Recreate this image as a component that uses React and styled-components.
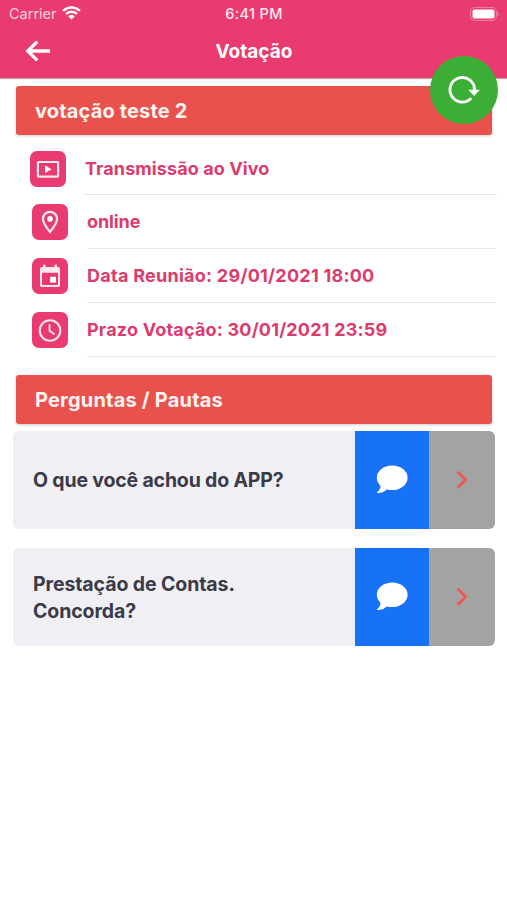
import styled, { createGlobalStyle } from "styled-components";

const GlobalStyle = createGlobalStyle`
    * {
        box-sizing: border-box;
    }

    body {
        margin: 0;
        background-color: #fff;
        font-family: Inter, "Liberation Sans", sans-serif;
    }

    button {
        border: none;
        padding: 0;
        background: none;
        font: inherit;
    }

    svg {
        display: block;
    }
`;

const Screen = styled.div`
    position: relative;
    width: 507px;
    height: 900px;
    overflow: hidden;
`;

const Header = styled.header`
    height: 78px;
    background-color: #e93b6f;
    box-shadow: 0 1px 1px rgba(80, 0, 30, 0.35);
    color: #fff;
`;

const StatusBar = styled.div`
    display: grid;
    grid-template-columns: 1fr auto 1fr;
    align-items: center;
    height: 27px;
    padding: 0 8px 0 9px;
`;

const Carrier = styled.div`
    display: flex;
    align-items: center;
    gap: 5px;
    font-size: 14.5px;
    color: #ffd3e0;
`;

const Time = styled.div`
    font-size: 14.5px;
    font-weight: 500;
    letter-spacing: 0.35px;
    color: #ffe8ef;
`;

const Battery = styled.svg`
    justify-self: end;
`;

const NavBar = styled.div`
    display: grid;
    grid-template-columns: 1fr auto 1fr;
    align-items: center;
    height: 49px;
    padding: 0 24px 0 25px;
`;

const Title = styled.h1`
    margin: 0;
    font-size: 19px;
    font-weight: 700;
`;

const RefreshButton = styled.button`
    position: absolute;
    top: 56px;
    right: 9px;
    display: grid;
    place-items: center;
    width: 68px;
    height: 68px;
    border-radius: 50%;
    background-color: #3bae36;
`;

const Banner = styled.h2`
    display: flex;
    align-items: center;
    height: 49px;
    margin: ${(props) => props.$margin};
    padding: 1px 19px 0;
    border-radius: 3px;
    background-color: #e9524c;
    box-shadow: 0 1px 3px rgba(0, 0, 0, 0.2);
    font-size: 20px;
    font-weight: 700;
    letter-spacing: ${(props) => props.$spacing};
    color: #fff4f1;
`;

const InfoList = styled.ul`
    margin: 0;
    padding: 0;
    list-style: none;
`;

const InfoRow = styled.li`
    display: flex;
    align-items: center;
    gap: ${(props) => (props.$wide ? "18px" : "19px")};
    height: 53.75px;
    padding-left: ${(props) => (props.$wide ? "30px" : "32px")};
    padding-right: ${(props) => (props.$wide ? "10px" : "11px")};
`;

const IconTile = styled.div`
    display: grid;
    place-items: center;
    width: 36px;
    height: 36px;
    border-radius: 7px;
    background-color: #e93b6f;
`;

const InfoText = styled.div`
    display: flex;
    flex: 1;
    align-items: center;
    height: 100%;
    padding-left: ${(props) => (props.$inset ? "1px" : "0")};
    border-bottom: 1px solid #e9e9ec;
    font-size: 18px;
    font-weight: 700;
    letter-spacing: ${(props) => props.$spacing};
    color: #dc3b6c;
`;

const QuestionList = styled.div`
    display: flex;
    flex-direction: column;
    gap: 19px;
    padding: 7px 12px 0 13px;
`;

const QuestionCard = styled.div`
    display: grid;
    grid-template-columns: 342px 74px 1fr;
    height: 98px;
    border-radius: 6px;
    overflow: hidden;
    background-color: #f0eff4;
`;

const Question = styled.div`
    display: flex;
    align-items: center;
    padding: 2px 40px 0 20px;
    white-space: pre-line;
    font-size: 19.5px;
    font-weight: 700;
    line-height: 27px;
    letter-spacing: ${(props) => props.$spacing};
    color: #3b3a48;
`;

const CommentButton = styled.button`
    display: grid;
    place-items: center;
    background-color: #1872f6;
`;

const OpenButton = styled.button`
    display: grid;
    place-items: center;
    background-color: #a3a3a3;
`;

function WifiIcon() {
    return (
        <svg width="19" height="15" viewBox="0 0 19 15" fill="none">
            <path
                d="M1.1 4.9a11.9 11.9 0 0 1 16.8 0M4 8a7.7 7.7 0 0 1 11 0"
                stroke="#fff"
                strokeWidth="2.4"
            />
            <path d="M9.5 13.6 6.2 10.3a4.6 4.6 0 0 1 6.6 0Z" fill="#fff" />
        </svg>
    );
}

function BatteryIcon() {
    return (
        <Battery width="29" height="14" viewBox="0 0 29 14" fill="none">
            <rect
                x="0.6"
                y="0.6"
                width="25.8"
                height="12.8"
                rx="3.5"
                stroke="#f282a5"
            />
            <rect x="2.5" y="2.5" width="22" height="9" rx="2" fill="#fff" />
            <path d="M27.4 5v4q1.5-.5 1.5-2t-1.5-2Z" fill="#f282a5" />
        </Battery>
    );
}

function BackIcon() {
    return (
        <svg width="26" height="24" viewBox="0 0 26 24" fill="none">
            <path
                d="M12.2 1.7 2.8 11l9.4 9.3M3 11h22"
                stroke="#fff"
                strokeWidth="3.3"
            />
        </svg>
    );
}

function RefreshIcon() {
    return (
        <svg width="34" height="30" viewBox="0 0 34 30" fill="none">
            <path
                d="M24.2 23.3A12.3 12.3 0 1 1 27.6 15"
                stroke="#fff"
                strokeWidth="2.9"
            />
            <path d="M21.3 14.8h11.6L27.1 21Z" fill="#fff" />
        </svg>
    );
}

function VideoIcon() {
    return (
        <svg width="24" height="20" viewBox="0 0 24 20" fill="none">
            <rect
                x="1.9"
                y="3"
                width="20.2"
                height="14.6"
                rx="0.8"
                stroke="#ffe7ee"
                strokeWidth="2.2"
            />
            <path d="M9 6.3v8l6.5-4Z" fill="#fff" />
        </svg>
    );
}

function PinIcon() {
    return (
        <svg width="18" height="24" viewBox="0 0 18 24" fill="none">
            <path
                d="M9 22C6.2 18.4 1.9 12.9 1.9 8.9a7.1 7.1 0 0 1 14.2 0C16.1 12.9 11.8 18.4 9 22Z"
                stroke="#ffe7ee"
                strokeWidth="2.2"
            />
            <circle cx="9" cy="8.9" r="2.8" fill="#fff" />
        </svg>
    );
}

function CalendarIcon() {
    return (
        <svg width="22" height="24" viewBox="0 0 22 24" fill="#ffe7ee">
            <path
                fillRule="evenodd"
                d="M4 .7h2.5V3h9V.7H18V3h1a2 2 0 0 1 2 2v16a2 2 0 0 1-2 2H3a2 2 0 0 1-2-2V5a2 2 0 0 1 2-2h1ZM3 8.8V21h16V8.8Z"
            />
            <path d="M11.2 12.8H17v5.8h-5.8Z" fill="#fff" />
        </svg>
    );
}

function ClockIcon() {
    return (
        <svg width="24" height="24" viewBox="0 0 24 24" fill="none">
            <circle cx="12" cy="12.5" r="10.3" stroke="#ffe7ee" strokeWidth="2" />
            <path d="M11.5 6.2v6.6l5 3.5" stroke="#ffe7ee" strokeWidth="1.8" />
        </svg>
    );
}

function CommentIcon() {
    return (
        <svg width="32" height="29" viewBox="0 0 32 29" fill="#fff">
            <ellipse cx="16.2" cy="12.7" rx="15.4" ry="12.3" />
            <path d="M4.6 18.5c.4 3.6-.8 6.6-3.4 8.6-.5.5-.2 1 .5 1 4.3-.2 7.2-1.6 9.7-4.4Z" />
        </svg>
    );
}

function ChevronIcon() {
    return (
        <svg width="12" height="20" viewBox="0 0 12 20" fill="none">
            <path
                d="m1.7 1.7 8 8-8 8"
                stroke="#ea5a53"
                strokeWidth="2.9"
            />
        </svg>
    );
}

const details = [
    { text: "Transmissão ao Vivo", Icon: VideoIcon, spacing: "0.1px" },
    { text: "online", Icon: PinIcon, spacing: "-0.1px" },
    {
        text: "Data Reunião: 29/01/2021 18:00",
        Icon: CalendarIcon,
        spacing: "0.26px",
    },
    {
        text: "Prazo Votação: 30/01/2021 23:59",
        Icon: ClockIcon,
        spacing: "0.2px",
    },
];

const questions = [
    { text: "O que você achou do APP?", spacing: "-0.17px" },
    { text: "Prestação de Contas.\nConcorda?", spacing: "-0.1px" },
];

export default function App() {
    return (
        <Screen>
            <GlobalStyle />
            <Header>
                <StatusBar>
                    <Carrier>
                        Carrier
                        <WifiIcon />
                    </Carrier>
                    <Time>6:41 PM</Time>
                    <BatteryIcon />
                </StatusBar>
                <NavBar>
                    <BackIcon />
                    <Title>Votação</Title>
                </NavBar>
            </Header>
            <RefreshButton aria-label="Atualizar">
                <RefreshIcon />
            </RefreshButton>

            <Banner $margin="8px 15px 6.7px 16px" $spacing="0.15px">
                votação teste 2
            </Banner>
            <InfoList>
                {details.map(({ text, Icon, spacing }, i) => (
                    <InfoRow key={text} $wide={i === 0}>
                        <IconTile>
                            <Icon />
                        </IconTile>
                        <InfoText $spacing={spacing} $inset={i === 0}>
                            {text}
                        </InfoText>
                    </InfoRow>
                ))}
            </InfoList>

            <Banner $margin="18.3px 15px 0 16px" $spacing="0.2px">
                Perguntas / Pautas
            </Banner>
            <QuestionList>
                {questions.map(({ text, spacing }) => (
                    <QuestionCard key={text}>
                        <Question $spacing={spacing}>{text}</Question>
                        <CommentButton aria-label="Comentar">
                            <CommentIcon />
                        </CommentButton>
                        <OpenButton aria-label="Abrir">
                            <ChevronIcon />
                        </OpenButton>
                    </QuestionCard>
                ))}
            </QuestionList>
        </Screen>
    );
}
